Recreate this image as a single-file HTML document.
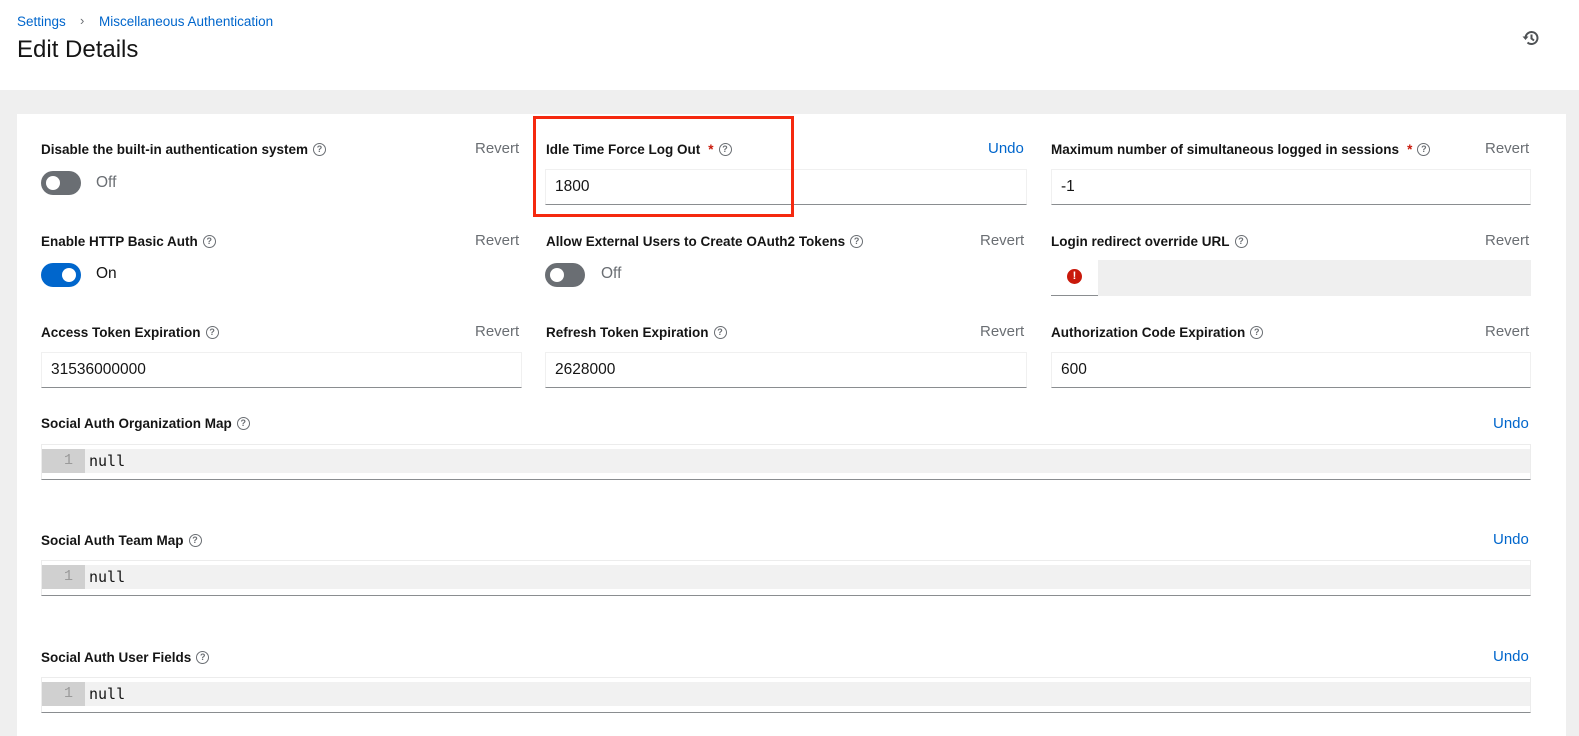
<!DOCTYPE html>
<html><head><meta charset="utf-8"><style>
*{box-sizing:border-box;margin:0;padding:0}
body{width:1579px;height:736px;overflow:hidden;background:#fff;font-family:"Liberation Sans",sans-serif;position:relative;color:#151515}
.a{position:absolute}
.lbl{position:absolute;font-size:13.5px;font-weight:bold;color:#151515;white-space:nowrap;display:flex;align-items:center;height:18px}
.q{display:inline-block;width:13px;height:13px;border:1.3px solid #6a6e73;border-radius:50%;font-size:9px;line-height:10px;text-align:center;color:#6a6e73;margin-left:5px;font-weight:bold}
.req{color:#c9190b;margin-left:8px;margin-right:0px}
.rv{position:absolute;font-size:15px;color:#6a6e73}
.un{position:absolute;font-size:15px;color:#0066cc}
.inp{position:absolute;height:36px;border:1px solid #f0f0f0;border-bottom:1px solid #8a8d90;font-size:15.5px;padding:8px 0 0 9px;color:#151515}
.tg{position:absolute;width:40px;height:24px;border-radius:12px;background:#6a6e73}
.tg::after{content:"";position:absolute;top:5px;left:5px;width:14px;height:14px;border-radius:50%;background:#fff}
.tg.on{background:#0066cc}.tg.on::after{left:21px}
.tt{position:absolute;font-size:15.5px;color:#6a6e73}
.ed{position:absolute;left:41px;width:1490px;height:36px;border:1px solid #ececec;border-bottom:1.5px solid #8a8d90}
.ed .ln{position:absolute;left:0;top:4px;right:0;height:24px;background:#f1f1f1}
.ed .gt2{position:absolute;left:0;top:4px;width:43px;height:24px;background:#d0d0d0}
.ed .n{position:absolute;left:0;width:31px;text-align:right;top:7px;font-family:"Liberation Mono",monospace;font-size:15px;color:#9a9a9a}
.ed .c{position:absolute;left:47px;top:7px;font-family:"DejaVu Sans Mono","Liberation Mono",monospace;font-size:15px;color:#151515}
</style></head><body>
<div class="a" style="left:17px;top:14px;font-size:13.5px;color:#0066cc">Settings</div>
<div class="a" style="left:80px;top:13px;font-size:13px;color:#6a6e73">&#8250;</div>
<div class="a" style="left:99px;top:14px;font-size:13.5px;color:#0066cc">Miscellaneous Authentication</div>
<div class="a" style="left:17px;top:36px;font-size:24px;color:#151515">Edit Details</div>
<svg class="a" style="left:1522px;top:30px" width="18" height="16" viewBox="0 0 18 16"><path d="M3.5 8a6 6 0 1 1 2 4.5" fill="none" stroke="#4f5255" stroke-width="2"/><path d="M0.5 6.5h6l-3 3.5z" fill="#4f5255"/><path d="M9.5 4.5v4l2.5 2" fill="none" stroke="#4f5255" stroke-width="2"/></svg>
<div class="a" style="left:0;top:90px;width:1579px;height:646px;background:#efefef"></div>
<div class="a" style="left:17px;top:114px;width:1549px;height:622px;background:#fff"></div>

<div class="lbl" style="left:41px;top:140px">Disable the built-in authentication system<span class="q">?</span></div>
<div class="rv" style="left:475px;top:140px">Revert</div>
<div class="tg" style="left:41px;top:171px"></div><div class="tt" style="left:96px;top:174px">Off</div>

<div class="lbl" style="left:546px;top:140px">Idle Time Force Log Out<span class="req">*</span><span class="q">?</span></div>
<div class="un" style="left:988px;top:140px">Undo</div>
<div class="inp" style="left:545px;top:169px;width:482px">1800</div>

<div class="lbl" style="left:1051px;top:140px">Maximum number of simultaneous logged in sessions<span class="req">*</span><span class="q">?</span></div>
<div class="rv" style="left:1485px;top:140px">Revert</div>
<div class="inp" style="left:1051px;top:169px;width:480px">-1</div>

<div class="a" style="left:533px;top:116px;width:261px;height:101px;border:3px solid #f5290f"></div>

<div class="lbl" style="left:41px;top:232px">Enable HTTP Basic Auth<span class="q">?</span></div>
<div class="rv" style="left:475px;top:232px">Revert</div>
<div class="tg on" style="left:41px;top:263px"></div><div class="tt" style="left:96px;top:265px;color:#151515">On</div>

<div class="lbl" style="left:546px;top:232px">Allow External Users to Create OAuth2 Tokens<span class="q">?</span></div>
<div class="rv" style="left:980px;top:232px">Revert</div>
<div class="tg" style="left:545px;top:263px"></div><div class="tt" style="left:601px;top:265px">Off</div>

<div class="lbl" style="left:1051px;top:232px">Login redirect override URL<span class="q">?</span></div>
<div class="rv" style="left:1485px;top:232px">Revert</div>
<div class="a" style="left:1051px;top:260px;width:480px;height:36px;background:#efefef"></div>
<div class="a" style="left:1051px;top:260px;width:47px;height:36px;background:#fff;border-bottom:1px solid #8a8d90"></div>
<div class="a" style="left:1067px;top:269px;width:15px;height:15px;border-radius:50%;background:#c9190b;color:#fff;font-size:11px;font-weight:bold;text-align:center;line-height:15px">!</div>

<div class="lbl" style="left:41px;top:323px">Access Token Expiration<span class="q">?</span></div>
<div class="rv" style="left:475px;top:323px">Revert</div>
<div class="inp" style="left:41px;top:352px;width:481px">31536000000</div>
<div class="lbl" style="left:546px;top:323px">Refresh Token Expiration<span class="q">?</span></div>
<div class="rv" style="left:980px;top:323px">Revert</div>
<div class="inp" style="left:545px;top:352px;width:482px">2628000</div>
<div class="lbl" style="left:1051px;top:323px">Authorization Code Expiration<span class="q">?</span></div>
<div class="rv" style="left:1485px;top:323px">Revert</div>
<div class="inp" style="left:1051px;top:352px;width:480px">600</div>

<div class="lbl" style="left:41px;top:414px">Social Auth Organization Map<span class="q">?</span></div>
<div class="un" style="left:1493px;top:415px">Undo</div>
<div class="ed" style="top:444px"><div class="ln"></div><div class="gt2"></div><div class="n">1</div><div class="c">null</div></div>

<div class="lbl" style="left:41px;top:531px">Social Auth Team Map<span class="q">?</span></div>
<div class="un" style="left:1493px;top:531px">Undo</div>
<div class="ed" style="top:560px"><div class="ln"></div><div class="gt2"></div><div class="n">1</div><div class="c">null</div></div>

<div class="lbl" style="left:41px;top:648px">Social Auth User Fields<span class="q">?</span></div>
<div class="un" style="left:1493px;top:648px">Undo</div>
<div class="ed" style="top:677px"><div class="ln"></div><div class="gt2"></div><div class="n">1</div><div class="c">null</div></div>
</body></html>
